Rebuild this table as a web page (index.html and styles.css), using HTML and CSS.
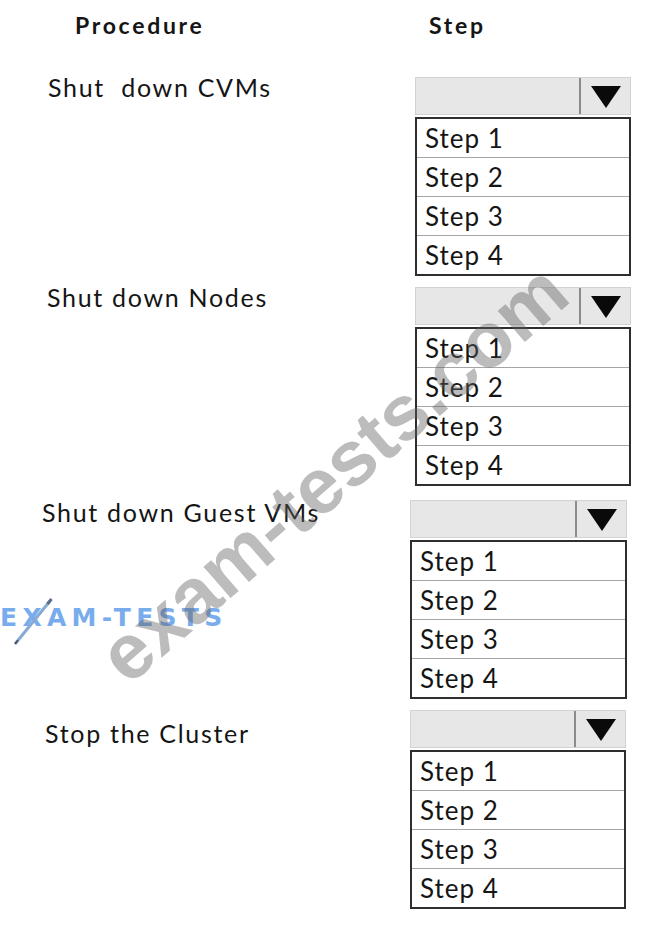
FILE: index.html
```html
<!DOCTYPE html>
<html lang="en">
<head>
<meta charset="utf-8">
<title>Procedure / Step</title>
<link rel="stylesheet" href="styles.css">
</head>
<body>
<div class="page">
  <div class="row head">
    <div class="h-proc">Procedure</div>
    <div class="h-step">Step</div>
  </div>

  <div class="row r1">
    <div class="label">Shut&nbsp; down CVMs</div>
    <div class="picker">
      <div class="combo"><span class="combo-field"></span><span class="combo-btn"><span class="tri"></span></span></div>
      <ul class="list"><li>Step 1</li><li>Step 2</li><li>Step 3</li><li>Step 4</li></ul>
    </div>
  </div>

  <div class="row r2">
    <div class="label">Shut down Nodes</div>
    <div class="picker">
      <div class="combo"><span class="combo-field"></span><span class="combo-btn"><span class="tri"></span></span></div>
      <ul class="list"><li>Step 1</li><li>Step 2</li><li>Step 3</li><li>Step 4</li></ul>
    </div>
  </div>

  <div class="row r3">
    <div class="label">Shut down Guest VMs</div>
    <div class="picker">
      <div class="combo"><span class="combo-field"></span><span class="combo-btn"><span class="tri"></span></span></div>
      <ul class="list"><li>Step 1</li><li>Step 2</li><li>Step 3</li><li>Step 4</li></ul>
    </div>
  </div>

  <div class="row r4">
    <div class="label">Stop the Cluster</div>
    <div class="picker">
      <div class="combo"><span class="combo-field"></span><span class="combo-btn"><span class="tri"></span></span></div>
      <ul class="list"><li>Step 1</li><li>Step 2</li><li>Step 3</li><li>Step 4</li></ul>
    </div>
  </div>

  <div class="logo">
    <span class="logo-text">EXAM-TESTS</span>
    <svg class="pencil" width="44" height="50" viewBox="0 0 44 50">
      <line x1="3" y1="46" x2="38" y2="3" stroke="#86a9d6" stroke-width="3" stroke-linecap="butt"/>
      <line x1="35.5" y1="6" x2="39.5" y2="1" stroke="#5a6f8c" stroke-width="3"/>
      <line x1="3" y1="46" x2="6" y2="42.3" stroke="#4d4d4d" stroke-width="1.6"/>
    </svg>
  </div>

  <div class="watermark">exam-tests.com</div>
</div>
</body>
</html>
```
FILE: styles.css
```css
* { box-sizing: border-box; }

body {
  margin: 0;
  background: #ffffff;
  font-family: Lato, "Open Sans", "Liberation Sans", sans-serif;
  color: #151515;
}

.page {
  position: relative;
  width: 670px;
  height: 952px;
  overflow: hidden;
}

.row {
  display: grid;
  grid-template-columns: 415px 216px;
  align-items: start;
}

.head {
  padding-top: 12px;
  font-weight: 700;
  font-size: 23px;
  line-height: 26px;
  letter-spacing: 2.7px;
}

.h-proc { padding-left: 75px; }
.h-step { padding-left: 14px; }

.label {
  font-size: 25px;
  line-height: 20px;
  letter-spacing: 1.7px;
  white-space: nowrap;
}

.r1 { margin-top: 39px; }
.r1 .label { padding-left: 48px; }

.r2 { margin-top: 11px; }
.r2 .label { padding-left: 47px; }

.r3 { margin-top: 14px; grid-template-columns: 410px 217px; }
.r3 .label { padding-left: 42px; padding-top: 2px; }

.r4 { margin-top: 11px; grid-template-columns: 410px 216px; }
.r4 .label { padding-left: 45px; padding-top: 13px; }

.picker {
  display: flex;
  flex-direction: column;
  gap: 2px;
}

.combo {
  display: flex;
  height: 38px;
  background: #e7e7e7;
  border: 1px solid #d2d2d2;
}

.combo-field { flex: 1; }

.combo-btn {
  width: 51px;
  border-left: 2px solid #8c8c8c;
  display: flex;
  align-items: center;
  justify-content: center;
  padding-top: 1px;
}

.tri {
  width: 0;
  height: 0;
  border-left: 15px solid transparent;
  border-right: 15px solid transparent;
  border-top: 22px solid #0a0a0a;
}

.list {
  list-style: none;
  margin: 0;
  padding: 0;
  border: 2px solid #2e2e2e;
  background: #ffffff;
}

.list li {
  height: 39px;
  padding-left: 8px;
  font-size: 26px;
  line-height: 38px;
  border-bottom: 1px solid #a6a6a6;
  letter-spacing: 1px;
}

.list li:last-child {
  border-bottom: none;
  height: 38px;
}

.logo {
  position: absolute;
  left: 0;
  top: 598px;
  width: 230px;
  height: 50px;
}

.logo-text {
  position: absolute;
  left: 0;
  top: 6px;
  font-family: "DejaVu Sans", sans-serif;
  font-weight: 700;
  font-size: 25px;
  line-height: 28px;
  letter-spacing: 5.3px;
  color: #6ea6ec;
  opacity: 0.92;
}

.pencil {
  position: absolute;
  left: 12px;
  top: 0;
}

.watermark {
  position: absolute;
  left: 333px;
  top: 473px;
  transform: translate(-50%, -50%) rotate(-41deg);
  font-family: "Liberation Sans", Arial, sans-serif;
  font-weight: 700;
  font-size: 78px;
  line-height: 1;
  white-space: nowrap;
  color: rgba(95, 95, 95, 0.42);
  pointer-events: none;
}
```
